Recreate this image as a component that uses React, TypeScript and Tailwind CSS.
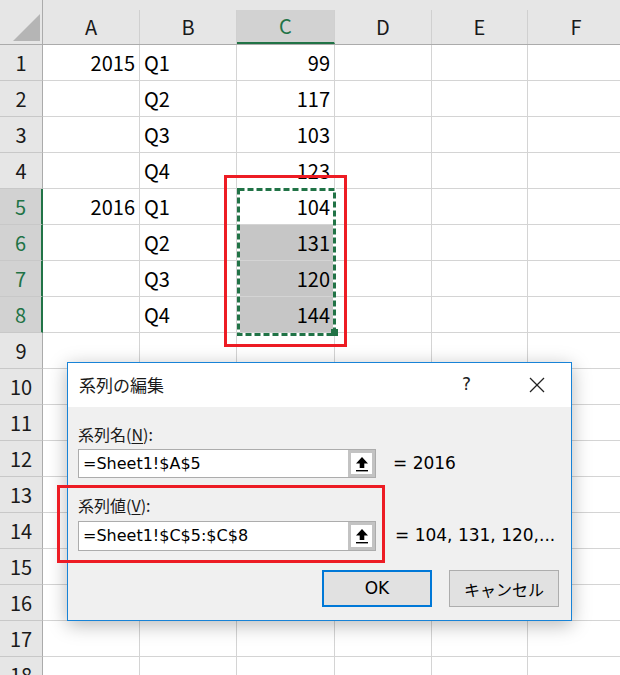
import React from "react";

const cols = [
  { key: "A", w: "w-[97px]" },
  { key: "B", w: "w-[97px]" },
  { key: "C", w: "w-[98px]" },
  { key: "D", w: "w-[97px]" },
  { key: "E", w: "w-[96px]" },
  { key: "F", w: "w-[97px]" },
];

const data: Record<number, [string, string, string]> = {
  1: ["2015", "Q1", "99"],
  2: ["", "Q2", "117"],
  3: ["", "Q3", "103"],
  4: ["", "Q4", "123"],
  5: ["2016", "Q1", "104"],
  6: ["", "Q2", "131"],
  7: ["", "Q3", "120"],
  8: ["", "Q4", "144"],
};

function UpArrowButton() {
  return (
    <div className="w-[27px] h-full bg-[#c3c3c3] p-[3px] flex">
      <div className="flex-1 bg-white flex items-center justify-center">
        <svg width="14" height="16" viewBox="0 0 14 16">
          <polygon points="7,1 13,7.5 9.3,7.5 9.3,12 4.7,12 4.7,7.5 1,7.5" fill="#000" />
          <rect x="1" y="14" width="12" height="1.4" fill="#000" />
        </svg>
      </div>
    </div>
  );
}

function RefInput({ value, h }: { value: string; h: string }) {
  return (
    <div className={`flex ${h} w-[298px] border border-[#acacac] bg-white`}>
      <div className="flex-1 flex items-center pl-[4px] text-[16px] text-black leading-none font-['DejaVu_Sans','Noto_Sans_CJK_JP',sans-serif]">
        {value}
      </div>
      <UpArrowButton />
    </div>
  );
}

export default function App() {
  const rows = Array.from({ length: 18 }, (_, i) => i + 1);
  return (
    <div className="relative w-[620px] h-[675px] overflow-hidden bg-white font-['Noto_Sans_CJK_JP','Noto_Sans',sans-serif] text-[#1a1a1a]">
      {/* Column header */}
      <div className="flex h-[45px] bg-[#e6e6e6] border-b border-[#ababab]">
        <div className="relative w-[43px] shrink-0 h-full border-r border-[#ababab]">
          <svg className="absolute left-[13px] top-[14px]" width="28" height="28" viewBox="0 0 28 28">
            <polygon points="27,0 27,27 0,27" fill="#b5b5b5" />
          </svg>
        </div>
        {cols.map((c) => {
          const sel = c.key === "C";
          return (
            <div key={c.key} className={`${c.w} shrink-0 h-full flex flex-col`}>
              <div className="h-[10px]" />
              <div
                className={`flex-1 flex items-center justify-center text-[20px] border-r border-[#d0d0d0] ${
                  sel ? "bg-[#d2d2d2] text-[#217346] border-b-2 border-b-[#217346]" : "text-[#1a1a1a]"
                }`}
              >
                {c.key}
              </div>
            </div>
          );
        })}
      </div>

      {/* Rows */}
      {rows.map((r) => {
        const selRow = r >= 5 && r <= 8;
        const d = data[r] || ["", "", ""];
        return (
          <div key={r} className="flex h-[36px]">
            <div
              className={`w-[43px] shrink-0 h-full flex items-center justify-center text-[20px] border-b border-[#c8c8c8] ${
                selRow
                  ? "bg-[#d2d2d2] text-[#217346] border-r-2 border-r-[#217346]"
                  : "bg-[#e6e6e6] text-[#1a1a1a] border-r border-r-[#ababab]"
              }`}
            >
              {r}
            </div>
            {cols.map((c, ci) => {
              const grey = c.key === "C" && r >= 6 && r <= 8;
              const txt = ci < 3 ? d[ci] : "";
              const right = c.key === "A" || c.key === "C";
              return (
                <div
                  key={c.key}
                  className={`${c.w} shrink-0 h-full border-r border-b border-[#d4d4d4] flex items-center text-[20px] text-black ${
                    right ? "justify-end pr-[4px]" : "justify-start pl-[4px]"
                  } ${grey ? "bg-[#c6c6c6]" : "bg-white"}`}
                >
                  {txt}
                </div>
              );
            })}
          </div>
        );
      })}

      {/* Marching ants selection */}
      <svg className="absolute left-[236px] top-[187px]" width="104" height="152" viewBox="0 0 104 152">
        <rect x="2.5" y="2.5" width="96" height="145" fill="none" stroke="#ffffff" strokeWidth="3" />
        <rect x="2.5" y="2.5" width="96" height="145" fill="none" stroke="#217346" strokeWidth="3" strokeDasharray="6 3" />
        <rect x="95" y="142" width="7" height="7" fill="#217346" />
      </svg>

      {/* Red highlight around column cells */}
      <div className="absolute left-[224px] top-[175px] w-[123px] h-[172px] border-[3px] border-[#ed1c24]" />

      {/* Dialog */}
      <div className="absolute left-[67px] top-[362px] w-[505px] h-[259px] border border-[#1883d7] bg-[#f0f0f0] shadow-[0_4px_18px_rgba(0,0,0,0.28)] flex flex-col">
        <div className="h-[44px] bg-white flex items-center pl-[11px] pr-[16px]">
          <span className="text-[17px] text-[#1a1a1a]">系列の編集</span>
          <span className="ml-auto mr-[58px] text-[17px] text-[#222] font-['DejaVu_Sans',sans-serif]">?</span>
          <svg width="16" height="16" viewBox="0 0 16 16" className="mr-[10px]">
            <line x1="1" y1="1" x2="15" y2="15" stroke="#222" strokeWidth="1.2" />
            <line x1="15" y1="1" x2="1" y2="15" stroke="#222" strokeWidth="1.2" />
          </svg>
        </div>
        <div className="flex flex-col pl-[10px]">
          <div className="mt-[15px] h-[24px] flex items-center text-[16px] text-[#1a1a1a]">
            系列名(<span className="underline underline-offset-2">N</span>):
          </div>
          <div className="mt-[3px] flex items-center">
            <RefInput value="=Sheet1!$A$5" h="h-[29px]" />
            <span className="ml-[17px] text-[17px] text-black font-['DejaVu_Sans',sans-serif]">= 2016</span>
          </div>
          <div className="mt-[15px] h-[24px] flex items-center text-[16px] text-[#1a1a1a]">
            系列値(<span className="underline underline-offset-2">V</span>):
          </div>
          <div className="mt-[4px] flex items-center">
            <RefInput value="=Sheet1!$C$5:$C$8" h="h-[30px]" />
            <span className="ml-[19px] text-[17px] text-black font-['DejaVu_Sans',sans-serif]">= 104, 131, 120,...</span>
          </div>
          <div className="mt-[19px] flex pl-[244px] gap-[17px]">
            <div className="w-[110px] h-[37px] border-2 border-[#0078d7] bg-[#e1e1e1] flex items-center justify-center text-[17px] text-black font-['DejaVu_Sans',sans-serif]">
              OK
            </div>
            <div className="w-[110px] h-[37px] border border-[#adadad] bg-[#e1e1e1] flex items-center justify-center text-[16px] text-black">
              キャンセル
            </div>
          </div>
        </div>
      </div>

      {/* Red highlight around 系列値 */}
      <div className="absolute left-[57px] top-[485px] w-[328px] h-[78px] border-[3px] border-[#ed1c24]" />
    </div>
  );
}
